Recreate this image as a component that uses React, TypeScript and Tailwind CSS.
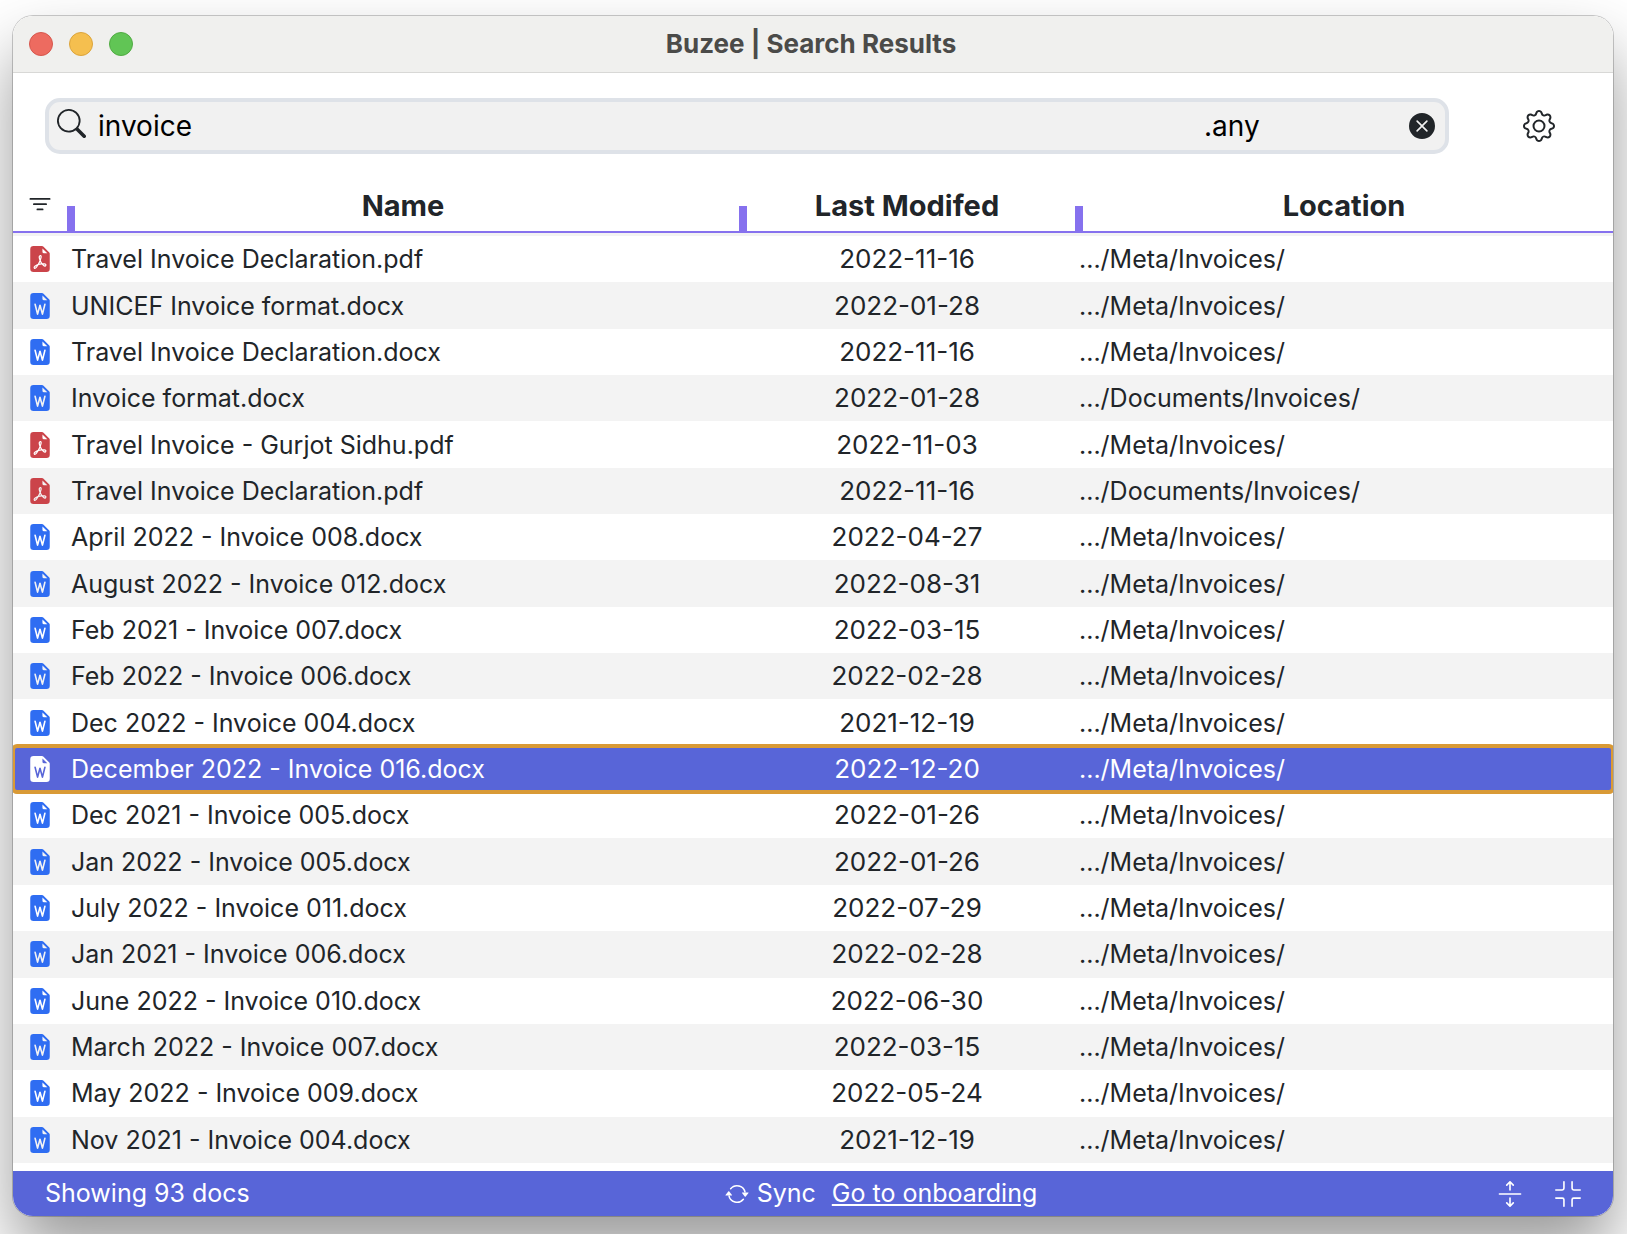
import {
  BsArrowRepeat,
  BsArrowsExpand,
  BsFileEarmarkPdfFill,
  BsFileEarmarkWordFill,
  BsFilter,
  BsFullscreenExit,
  BsGear,
  BsSearch,
  BsXCircleFill,
} from 'react-icons/bs';

const META = '.../Meta/Invoices/';
const DOCUMENTS = '.../Documents/Invoices/';

const docs = [
  ['Travel Invoice Declaration.pdf', '2022-11-16', META],
  ['UNICEF Invoice format.docx', '2022-01-28', META],
  ['Travel Invoice Declaration.docx', '2022-11-16', META],
  ['Invoice format.docx', '2022-01-28', DOCUMENTS],
  ['Travel Invoice - Gurjot Sidhu.pdf', '2022-11-03', META],
  ['Travel Invoice Declaration.pdf', '2022-11-16', DOCUMENTS],
  ['April 2022 - Invoice 008.docx', '2022-04-27', META],
  ['August 2022 - Invoice 012.docx', '2022-08-31', META],
  ['Feb 2021 - Invoice 007.docx', '2022-03-15', META],
  ['Feb 2022 - Invoice 006.docx', '2022-02-28', META],
  ['Dec 2022 - Invoice 004.docx', '2021-12-19', META],
  ['December 2022 - Invoice 016.docx', '2022-12-20', META],
  ['Dec 2021 - Invoice 005.docx', '2022-01-26', META],
  ['Jan 2022 - Invoice 005.docx', '2022-01-26', META],
  ['July 2022 - Invoice 011.docx', '2022-07-29', META],
  ['Jan 2021 - Invoice 006.docx', '2022-02-28', META],
  ['June 2022 - Invoice 010.docx', '2022-06-30', META],
  ['March 2022 - Invoice 007.docx', '2022-03-15', META],
  ['May 2022 - Invoice 009.docx', '2022-05-24', META],
  ['Nov 2021 - Invoice 004.docx', '2021-12-19', META],
];

const SELECTED = 11;

function TitleBar() {
  return (
    <header className="relative flex h-[57px] shrink-0 items-center justify-center border-b border-[#d8d8d6] bg-[#f0f0ee] pr-1">
      <div className="absolute left-4 flex gap-4">
        <button aria-label="Close" className="size-6 rounded-full border border-[#d6574d] bg-[#ed6b60]" />
        <button aria-label="Minimize" className="size-6 rounded-full border border-[#dba43c] bg-[#f5bf4f]" />
        <button aria-label="Zoom" className="size-6 rounded-full border border-[#51ab43] bg-[#61c555]" />
      </div>
      <h1 className="text-[26px] leading-8 font-bold text-[#4b4b49]">Buzee | Search Results</h1>
    </header>
  );
}

function SearchBar() {
  return (
    <div className="flex shrink-0 items-center gap-[74px] pt-[25px] pr-[58px] pb-[27px] pl-8">
      <form className="flex h-14 flex-1 items-center rounded-[15px] border-4 border-[#dee2e8] bg-[#f1f1f1] pr-[10px] pl-2 text-[28px] text-black">
        <BsSearch className="mb-1.5 size-[29px] text-[#212529]" />
        <input
          aria-label="Search"
          defaultValue="invoice"
          className="ml-3 h-12 min-w-0 flex-1 bg-transparent outline-none"
        />
        <select aria-label="File type" className="h-12 w-[205px] appearance-none bg-transparent outline-none">
          <option>.any</option>
        </select>
        <button type="button" aria-label="Clear search" className="text-[#212529]">
          <BsXCircleFill className="size-[26px]" />
        </button>
      </form>
      <button aria-label="Settings">
        <BsGear className="size-8" />
      </button>
    </div>
  );
}

function Resizer() {
  return <span className="absolute bottom-0 -left-1 h-[25px] w-2 bg-[#8671ee]" />;
}

function Results() {
  return (
    <div className="flex flex-1 flex-col pb-2">
      <table className="w-full flex-1 table-fixed border-separate border-spacing-0 text-[25px] leading-[30px]">
        <colgroup>
          <col className="w-[58px]" />
          <col className="w-[42%]" />
          <col className="w-[21%]" />
          <col />
        </colgroup>
        <thead className="text-[29px]">
          <tr className="h-[55px]">
            <th className="border-b-[3px] border-[#f3f3f3] p-0">
              <div className="flex h-[52px] items-center justify-center border-b-2 border-[#8671ee] pr-1 pb-0.5">
                <button aria-label="Filter">
                  <BsFilter className="size-7" />
                </button>
              </div>
            </th>
            {['Name', 'Last Modifed', 'Location'].map((label) => (
              <th key={label} className="group border-b-[3px] border-[#f3f3f3] p-0">
                <div className="relative flex h-[52px] items-center justify-center border-b-2 border-[#8671ee] pr-2 group-last:pr-1">
                  <Resizer />
                  {label}
                </div>
              </th>
            ))}
          </tr>
        </thead>
        <tbody>
          {docs.map(([name, date, location], i) => {
            const active = i === SELECTED;
            const Icon = name.endsWith('.pdf') ? BsFileEarmarkPdfFill : BsFileEarmarkWordFill;
            const tint = name.endsWith('.pdf') ? 'text-[#cb444a]' : 'text-[#2f6df2]';
            return (
              <tr
                key={i}
                className={
                  active
                    ? 'relative rounded-[4px] bg-[#5865d8] text-white outline-4 -outline-offset-2 outline-[#d99a36]'
                    : 'even:bg-[#f3f3f3]'
                }
              >
                <td className="pl-3.5">
                  <Icon className={`size-[26px] ${active ? 'text-white' : tint}`} />
                </td>
                <td className="py-1.5">{name}</td>
                <td className="py-1.5 pr-2 text-center text-[26px]">{date}</td>
                <td className="py-1.5">{location}</td>
              </tr>
            );
          })}
        </tbody>
      </table>
    </div>
  );
}

function StatusBar() {
  return (
    <footer className="grid h-[45px] shrink-0 grid-cols-[5fr_auto_4fr] items-center bg-[#5865d8] px-8 text-[25px] text-white">
      <span>Showing 93 docs</span>
      <div className="flex items-center gap-4">
        <button className="flex items-center gap-2">
          <BsArrowRepeat className="size-6" />
          Sync
        </button>
        <a href="#onboarding" className="underline">
          Go to onboarding
        </a>
      </div>
      <div className="flex items-center justify-end gap-8">
        <button aria-label="Expand rows">
          <BsArrowsExpand className="size-[26px]" />
        </button>
        <button aria-label="Exit full screen">
          <BsFullscreenExit className="size-[26px]" />
        </button>
      </div>
    </footer>
  );
}

export default function App() {
  return (
    <div className="flex min-h-screen flex-col overflow-hidden bg-white pt-4 pr-[14px] pb-[18px] pl-[13px] font-['Inter',sans-serif] text-[#212529]">
      <main className="flex flex-1 flex-col rounded-[20px] shadow-[0_0_0_1px_rgba(0,0,0,0.2),0_36px_66px_rgba(0,0,0,0.4)]">
        <div className="flex flex-1 flex-col overflow-hidden rounded-[20px] bg-white">
          <TitleBar />
          <SearchBar />
          <Results />
          <StatusBar />
        </div>
      </main>
    </div>
  );
}
